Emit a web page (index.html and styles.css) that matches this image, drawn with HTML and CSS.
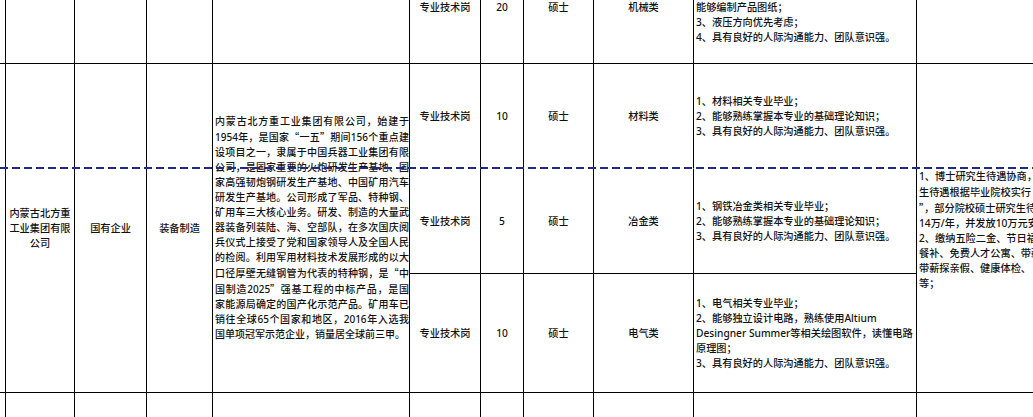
FILE: index.html
```html
<!DOCTYPE html>
<html lang="zh-CN">
<head>
<meta charset="utf-8">
<title>招聘信息表</title>
<link rel="stylesheet" href="styles.css">
</head>
<body>
<div class="sheet">
  <!-- row 1 -->
  <div class="c r1 c0"></div>
  <div class="c r1"></div>
  <div class="c r1"></div>
  <div class="c r1"></div>
  <div class="c r1"></div>
  <div class="c r1 top">专业技术岗</div>
  <div class="c r1 top">20</div>
  <div class="c r1 top">硕士</div>
  <div class="c r1 top">机械类</div>
  <div class="c r1 top left">
    <span class="ln">能够编制产品图纸；</span>
    <span class="ln">3、液压方向优先考虑；</span>
    <span class="ln">4、具有良好的人际沟通能力、团队意识强。</span>
  </div>
  <div class="c r1 last"></div>

  <!-- merged company cells (rows 2-4) -->
  <div class="c span3 col0 c0"></div>
  <div class="c span3 col1">
    <span class="ln">内蒙古北方重</span>
    <span class="ln">工业集团有限</span>
    <span class="ln">公司</span>
  </div>
  <div class="c span3 col2">国有企业</div>
  <div class="c span3 col3">装备制造</div>
  <div class="c span3 col4 left desc">
    <span class="ln full">内蒙古北方重工业集团有限公司，始建于</span>
    <span class="ln full">1954年，是国家<span class="cjk">“一五”</span>期间156个重点建</span>
    <span class="ln full">设项目之一，隶属于中国兵器工业集团有限</span>
    <span class="ln full">公司，是国家重要的火炮研发生产基地、国</span>
    <span class="ln full">家高强韧炮钢研发生产基地、中国矿用汽车</span>
    <span class="ln full">研发生产基地。公司形成了军品、特种钢、</span>
    <span class="ln full">矿用车三大核心业务。研发、制造的大量武</span>
    <span class="ln full">器装备列装陆、海、空部队，在多次国庆阅</span>
    <span class="ln full">兵仪式上接受了党和国家领导人及全国人民</span>
    <span class="ln full">的检阅。利用军用材料技术发展形成的以大</span>
    <span class="ln full">口径厚壁无缝钢管为代表的特种钢，是<span class="cjk">“</span>中</span>
    <span class="ln full">国制造2025<span class="cjk">”</span>强基工程的中标产品，是国</span>
    <span class="ln full">家能源局确定的国产化示范产品。矿用车已</span>
    <span class="ln full">销往全球65个国家和地区，2016年入选我</span>
    <span class="ln">国单项冠军示范企业，销量居全球前三甲。</span>
  </div>

  <!-- row 2 -->
  <div class="c r2 col5">专业技术岗</div>
  <div class="c r2">10</div>
  <div class="c r2">硕士</div>
  <div class="c r2">材料类</div>
  <div class="c r2 left">
    <span class="ln">1、材料相关专业毕业；</span>
    <span class="ln">2、能够熟练掌握本专业的基础理论知识；</span>
    <span class="ln">3、具有良好的人际沟通能力、团队意识强。</span>
  </div>
  <div class="c r2 last"></div>

  <!-- row 3 -->
  <div class="c r3 col5">专业技术岗</div>
  <div class="c r3">5</div>
  <div class="c r3">硕士</div>
  <div class="c r3">冶金类</div>
  <div class="c r3 left">
    <span class="ln">1、钢铁冶金类相关专业毕业；</span>
    <span class="ln">2、能够熟练掌握本专业的基础理论知识；</span>
    <span class="ln">3、具有良好的人际沟通能力、团队意识强。</span>
  </div>
  <div class="c span2 last benefits">
    <span class="ln">1、博士研究生待遇协商，硕士研究</span>
    <span class="ln">生待遇根据毕业院校实行&nbsp;&nbsp;<span class="cjk">“</span>双一流</span>
    <span class="ln"><span class="cjk">”</span>，部分院校硕士研究生待遇可达</span>
    <span class="ln">14万/年，并发放10万元安家费；</span>
    <span class="ln">2、缴纳五险二金、节日福利、</span>
    <span class="ln">餐补、免费人才公寓、带薪年休假、</span>
    <span class="ln">带薪探亲假、健康体检、</span>
    <span class="ln">等；</span>
  </div>

  <!-- row 4 -->
  <div class="c r4 col5">专业技术岗</div>
  <div class="c r4">10</div>
  <div class="c r4">硕士</div>
  <div class="c r4">电气类</div>
  <div class="c r4 left">
    <span class="ln">1、电气相关专业毕业；</span>
    <span class="ln">2、能够独立设计电路，熟练使用Altium</span>
    <span class="ln">Desingner Summer等相关绘图软件，读懂电路</span>
    <span class="ln">原理图；</span>
    <span class="ln">3、具有良好的人际沟通能力、团队意识强。</span>
  </div>

  <!-- row 5 -->
  <div class="c r5 c0"></div>
  <div class="c r5"></div>
  <div class="c r5"></div>
  <div class="c r5"></div>
  <div class="c r5"></div>
  <div class="c r5"></div>
  <div class="c r5"></div>
  <div class="c r5"></div>
  <div class="c r5"></div>
  <div class="c r5"></div>
  <div class="c r5 last"></div>

  <div class="pagebreak"></div>
</div>
</body>
</html>
```

FILE: styles.css
```css
html, body {
  margin: 0;
  padding: 0;
  background: #ffffff;
  overflow: hidden;
}

.sheet {
  position: relative;
  width: 1110px;
  display: grid;
  grid-template-columns: 6px 69px 72px 66px 197px 71px 43px 70px 100px 223px 193px;
  grid-template-rows: 64px 105px 105px 119px 40px;
  font-family: "Noto Sans", "Noto Sans CJK SC", sans-serif;
  font-size: 10.2px;
  font-weight: 500;
  line-height: 15px;
  color: #111111;
}

.cjk {
  font-family: "Noto Sans CJK SC", sans-serif;
}

.c {
  box-sizing: border-box;
  border-right: 1px solid #000;
  border-bottom: 1px solid #000;
  display: flex;
  flex-direction: column;
  justify-content: center;
  align-items: center;
  text-align: center;
  overflow: hidden;
  min-width: 0;
}

.c.top {
  justify-content: flex-start;
}

.c.left {
  align-items: stretch;
  text-align: left;
  padding-left: 2px;
  padding-right: 0;
}

.ln {
  display: block;
  white-space: nowrap;
}

.span3 {
  grid-row: 2 / span 3;
}

.span2 {
  grid-row: 3 / span 2;
  grid-column: 11;
}

.col0 { grid-column: 1; }
.col1 { grid-column: 2; }
.col2 { grid-column: 3; }
.col3 { grid-column: 4; }
.col4 { grid-column: 5; }
.col5 { grid-column: 6; }

.r2 {
  border-bottom-color: transparent;
}

.desc {
  font-size: 10px;
}

.desc .ln.full {
  white-space: normal;
  text-align: justify;
  text-align-last: justify;
}

.benefits {
  justify-content: flex-start;
  align-items: flex-start;
  text-align: left;
  padding-left: 2px;
  padding-top: 0;
}

.last {
  border-right: none;
}

.pagebreak {
  position: absolute;
  left: 0;
  right: 0;
  top: 167px;
  height: 2px;
  background: repeating-linear-gradient(to right, #1f2a88 0 8px, transparent 8px 12px);
}
```
